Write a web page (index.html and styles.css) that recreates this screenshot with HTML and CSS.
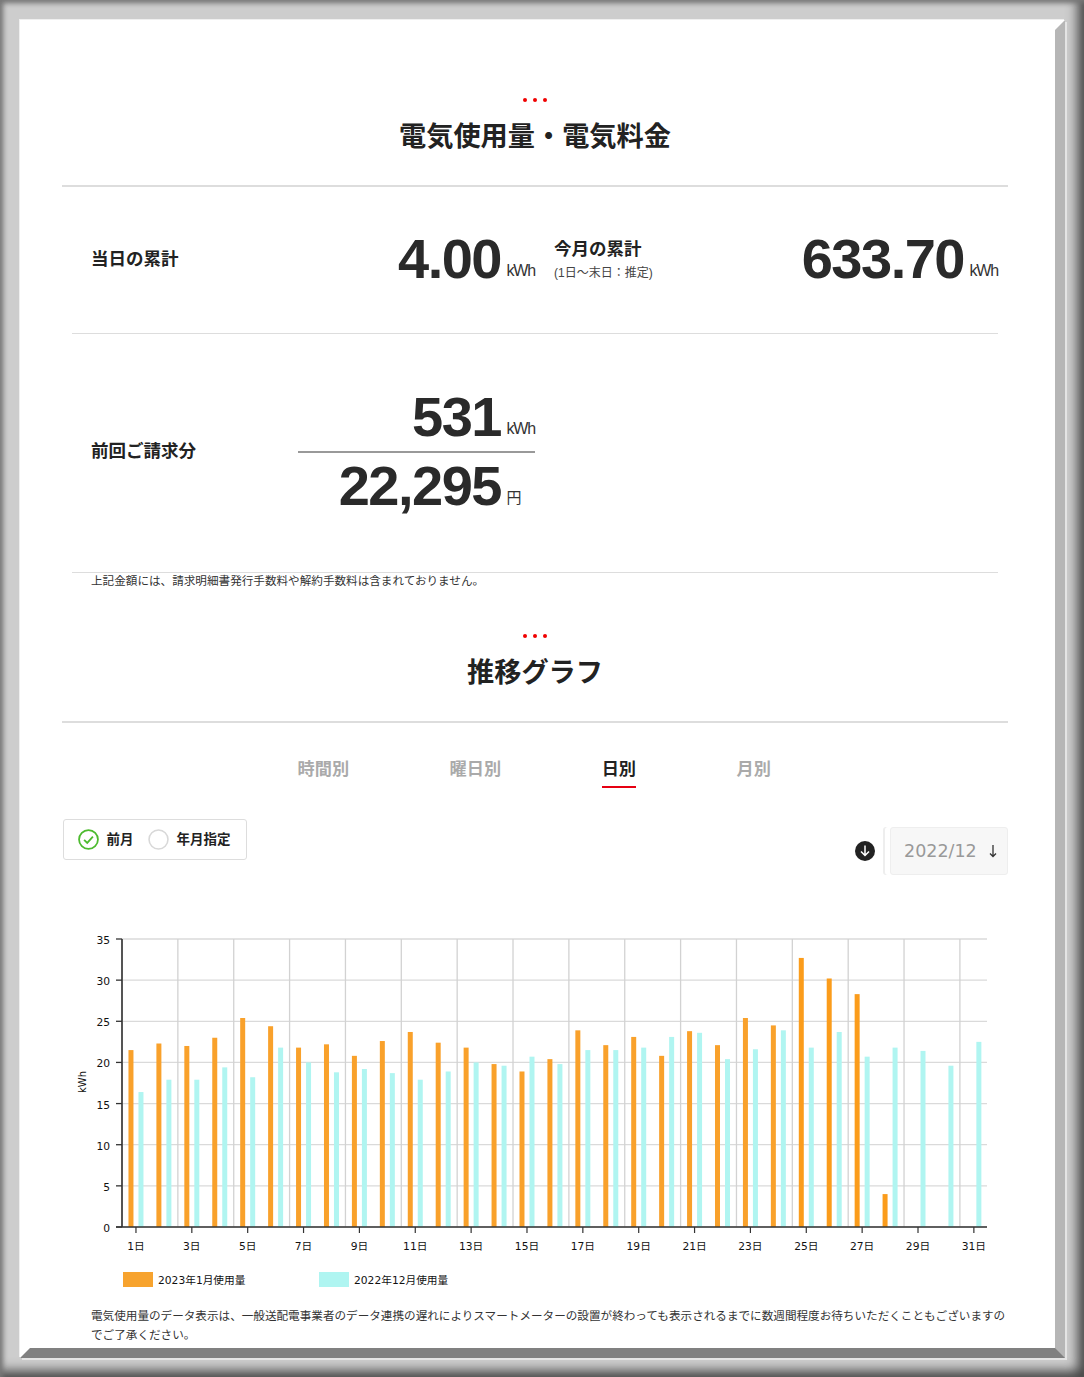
FILE: index.html
```html
<!DOCTYPE html>
<html lang="ja">
<head>
  <meta charset="UTF-8">
  <title>電気使用量・電気料金</title>
  <link rel="stylesheet" href="styles.css">
</head>
<body>
  <div class="frame">
    <div class="page">
      <div class="content">

        <div class="head">
          <div class="dots"><span></span><span></span><span></span></div>
          <h2>電気使用量・電気料金</h2>
        </div>

        <div class="row row-today">
          <div class="cell">
            <div class="label">当日の累計</div>
            <div class="value"><span class="num">4.00</span><span class="unit">kWh</span></div>
          </div>
          <div class="cell">
            <div class="label">今月の累計<small>(1日～末日：推定)</small></div>
            <div class="value"><span class="num">633.70</span><span class="unit">kWh</span></div>
          </div>
        </div>

        <div class="row row-bill">
          <div class="cell">
            <div class="label">前回ご請求分</div>
            <div class="stack">
              <div class="value value-top"><span class="num">531</span><span class="unit">kWh</span></div>
              <div class="value"><span class="num">22,295</span><span class="unit unit-yen">円</span></div>
            </div>
          </div>
        </div>
        <p class="note">上記金額には、請求明細書発行手数料や解約手数料は含まれておりません。</p>

        <div class="head head-graph">
          <div class="dots"><span></span><span></span><span></span></div>
          <h2>推移グラフ</h2>
        </div>

        <div class="tabs">
          <span class="tab">時間別</span>
          <span class="tab">曜日別</span>
          <span class="tab active">日別</span>
          <span class="tab">月別</span>
        </div>

        <div class="controls">
          <div class="radios">
            <svg class="radio" viewBox="0 0 20 20"><circle cx="10" cy="10" r="9" fill="none" stroke="#4dbb2f" stroke-width="1.7"/><path d="M5.800 10.300l3 3 5.400-6" fill="none" stroke="#4dbb2f" stroke-width="1.7"/></svg>
            <span class="radio-text">前月</span>
            <svg class="radio" viewBox="0 0 20 20"><circle cx="10" cy="10" r="9" fill="none" stroke="#d8d8d8" stroke-width="1.5"/></svg>
            <span class="radio-text">年月指定</span>
          </div>
          <div class="picker">
            <svg class="download" viewBox="0 0 20 20"><circle cx="10" cy="10" r="10" fill="#222"/><path d="M10 4.500v10M6 10.500l4 4 4-4" fill="none" stroke="#fff" stroke-width="1.500"/></svg>
            <div class="month">2022/12<svg class="month-arrow" viewBox="0 0 10 14"><path d="M5 1v11.500M2 9.500l3 3 3-3" fill="none" stroke="#333" stroke-width="1.300"/></svg></div>
          </div>
        </div>

        <svg id="chart" class="chart" viewBox="62 930 946 366"></svg>

        <p class="notice">電気使用量のデータ表示は、一般送配電事業者のデータ連携の遅れによりスマートメーターの設置が終わっても表示されるまでに数週間程度お待ちいただくこともございますのでご了承ください。</p>
      </div>
    </div>
  </div>
  <script src="chart.js"></script>
</body>
</html>
```

FILE: styles.css
```css
* {
  box-sizing: border-box;
}
body {
  margin: 0;
  font-family: "Liberation Sans", "Noto Sans CJK JP", sans-serif;
  color: #222;
}
.frame {
  width: 1084px;
  height: 1377px;
  padding: 20px 19px 19px 20px;
  background: #cdcdcd;
  box-shadow: inset 3px 3px 5px #777, inset -6px -6px 12px #444;
  overflow: hidden;
}
.page {
  height: 1338px;
  background: #fff;
  border: 10px solid;
  border-color: #fff #b6b6b6 #808080 #fff;
  box-shadow: 2px 2px 0 #e4e4e4, -1px -1px 0 #efefef;
  overflow: hidden;
}
.content {
  width: 946px;
  margin-left: 32px;
  padding-top: 68px;
}

.head {
  height: 89px;
  border-bottom: 2px solid #ddd;
  text-align: center;
}
.dots {
  display: flex;
  justify-content: center;
  gap: 6px;
  height: 4px;
}
.dots span {
  width: 4px;
  height: 4px;
  border-radius: 50%;
  background: #f00000;
}
.head h2 {
  margin: 17px 0 0;
  font-size: 27.2px;
  line-height: 36px;
  font-weight: 700;
}
.head-graph {
  margin-top: 45px;
}

.row {
  display: grid;
  grid-template-columns: 463px 463px;
  margin: 0 10px;
  border-bottom: 1px solid #ddd;
}
.row-today {
  height: 147px;
}
.row-today .cell {
  padding-bottom: 2px;
}
.row-today .label {
  margin-bottom: 4px;
}
.row-bill {
  height: 239px;
}
.row-bill .cell {
  padding-bottom: 4px;
}
.row-bill .label {
  margin-bottom: 4px;
}
.cell {
  display: flex;
  align-items: center;
  padding-left: 19px;
}
.label {
  font-size: 17.5px;
  font-weight: 700;
}
.label small {
  display: block;
  margin-top: 3px;
  font-size: 12px;
  font-weight: 400;
  color: #444;
}
.value {
  display: flex;
  align-items: baseline;
  justify-content: flex-end;
  margin-left: auto;
}
.num {
  font-size: 56px;
  line-height: 68px;
  font-weight: 700;
  letter-spacing: -1.5px;
  color: #2a2a2a;
}
.unit {
  width: 28.5px;
  margin-left: 5.5px;
  font-size: 16px;
  letter-spacing: -1.2px;
  color: #333;
  transform: translateY(-2px);
}
.unit-yen {
  font-size: 15px;
}
.stack {
  width: 237px;
  margin-left: auto;
}
.stack .value:last-child .num {
  line-height: 66px;
}
.value-top {
  border-bottom: 2px solid #999;
}
.note {
  margin: -2px 0 0 29px;
  padding-top: 2px;
  font-size: 11.6px;
  line-height: 16px;
  color: #333;
}

.tabs {
  display: flex;
  gap: 100.5px;
  height: 67px;
  margin-left: 235.5px;
  padding-top: 34px;
}
.tab {
  height: 31px;
  font-size: 17.2px;
  line-height: 24px;
  font-weight: 700;
  color: #aaa;
}
.tab.active {
  color: #222;
  border-bottom: 2px solid #e60012;
}

.controls {
  display: flex;
  justify-content: space-between;
  align-items: flex-start;
  height: 111px;
  margin-top: 29px;
}
.radios {
  display: flex;
  align-items: center;
  width: 184px;
  height: 41px;
  margin-left: 1px;
  padding-left: 14px;
  border: 1px solid #ddd;
  border-radius: 3px;
}
.radio {
  width: 21px;
  height: 21px;
}
.radio-text {
  margin: 0 14.5px 4px 7.5px;
  font-size: 13.5px;
  font-weight: 700;
  color: #222;
}
.picker {
  display: flex;
  align-items: center;
  height: 50px;
  margin-top: 7px;
}
.download {
  width: 20px;
  height: 20px;
  margin-right: 9px;
}
.month {
  display: flex;
  align-items: center;
  width: 118px;
  height: 48px;
  margin-left: 6px;
  padding-left: 13px;
  border: 1px solid #eee;
  border-radius: 3px;
  background: #f7f7f7;
  box-shadow: -5px 0 0 #fff, -7px 0 0 #eee;
  font-family: "DejaVu Sans", sans-serif;
  font-size: 17.5px;
  color: #999;
}
.month-arrow {
  width: 10px;
  height: 14px;
  margin-left: 11px;
}

.chart {
  display: block;
  width: 946px;
  height: 366px;
}
.chart text {
  font-family: "DejaVu Sans", "Noto Sans CJK JP", sans-serif;
  font-size: 10.7px;
  fill: #111;
}
.notice {
  margin: 10px 0 0 29px;
  font-size: 11.6px;
  line-height: 19px;
  color: #333;
}
```

FILE: chart.js
```js
var used = [21.5,22.3,22,23,25.4,24.4,21.8,22.2,20.8,22.6,23.7,22.4,21.8,19.8,18.9,20.4,23.9,22.1,23.1,20.8,23.8,22.1,25.4,24.5,32.7,30.2,28.3,4];
var prev = [16.4,17.9,17.9,19.4,18.2,21.8,20,18.8,19.2,18.7,17.9,18.9,20,19.6,20.7,19.8,21.5,21.5,21.8,23.1,23.6,20.4,21.6,23.9,21.8,23.7,20.7,21.8,21.4,19.6,22.5];

var left = 122, right = 987, top0 = 939, base = 1227;
var dayW = 27.93;
var yOf = function (v) { return base - v * (base - top0) / 35; };
var out = "";

function line(x1, y1, x2, y2, color, w) {
  out += '<line x1="' + x1 + '" y1="' + y1 + '" x2="' + x2 + '" y2="' + y2 + '" stroke="' + color + '" stroke-width="' + w + '"/>';
}
function rect(x, y, w, h, color) {
  out += '<rect x="' + x + '" y="' + y + '" width="' + w + '" height="' + h + '" fill="' + color + '"/>';
}
function text(x, y, s, anchor) {
  out += '<text x="' + x + '" y="' + y + '" text-anchor="' + anchor + '">' + s + '</text>';
}

// grid
for (var v = 0; v <= 35; v += 5) {
  line(left, yOf(v), right, yOf(v), "#dadada", 1.3);
}
for (var i = 2; i < 31; i += 2) {
  line(left + i * dayW, top0, left + i * dayW, base, "#d2d2d2", 1.3);
}

// bars
used.forEach(function (u, d) {
  var c = left + (d + 0.5) * dayW;
  rect(c - 7.5, yOf(u), 5, base - yOf(u), d > 23 ? "#fb9c1b" : "#f9a12b");
});
prev.forEach(function (u, d) {
  var c = left + (d + 0.5) * dayW;
  rect(c + 2.5, yOf(u), 5, base - yOf(u), "#b0f5f1");
});

// axes
line(122, top0, 122, base, "#555", 2);
line(116, base, right, base, "#333", 1.5);
for (v = 0; v <= 35; v += 5) {
  line(116, yOf(v), 122, yOf(v), "#333", 1.3);
  text(110, yOf(v) + 5, v, "end");
}
for (i = 0; i < 31; i += 2) {
  var x = left + (i + 0.5) * dayW;
  line(x, base, x, base + 6, "#333", 1.2);
  text(x, 1250, (i + 1) + "日", "middle");
}
out += '<text x="0" y="0" transform="translate(86 1082) rotate(-90)" text-anchor="middle" style="font-size:10px">kWh</text>';

// legend
rect(123, 1272, 30, 15, "#f7a32e");
text(158, 1284, "2023年1月使用量", "start");
rect(319, 1272, 30, 15, "#aff5f1");
text(354, 1284, "2022年12月使用量", "start");

document.getElementById("chart").innerHTML = out;
```
